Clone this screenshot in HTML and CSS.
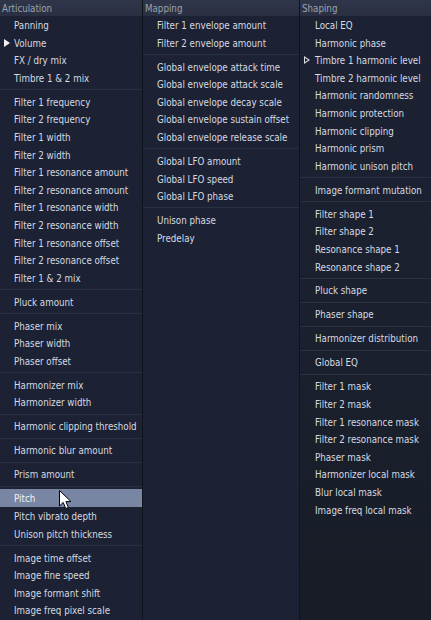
FILE: index.html
```html
<!DOCTYPE html>
<html>
<head>
<meta charset="utf-8">
<link rel="stylesheet" href="styles.css">
</head>
<body>
<div class="menu">
  <div class="col col-a">
    <div class="head">Articulation</div>
    <div class="item">Panning</div>
    <div class="item"><span class="mark filled"></span>Volume</div>
    <div class="item">FX / dry mix</div>
    <div class="item">Timbre 1 &amp; 2 mix</div>
    <div class="sep"></div>
    <div class="item">Filter 1 frequency</div>
    <div class="item">Filter 2 frequency</div>
    <div class="item">Filter 1 width</div>
    <div class="item">Filter 2 width</div>
    <div class="item">Filter 1 resonance amount</div>
    <div class="item">Filter 2 resonance amount</div>
    <div class="item">Filter 1 resonance width</div>
    <div class="item">Filter 2 resonance width</div>
    <div class="item">Filter 1 resonance offset</div>
    <div class="item">Filter 2 resonance offset</div>
    <div class="item">Filter 1 &amp; 2 mix</div>
    <div class="sep"></div>
    <div class="item">Pluck amount</div>
    <div class="sep"></div>
    <div class="item">Phaser mix</div>
    <div class="item">Phaser width</div>
    <div class="item">Phaser offset</div>
    <div class="sep"></div>
    <div class="item">Harmonizer mix</div>
    <div class="item">Harmonizer width</div>
    <div class="sep"></div>
    <div class="item">Harmonic clipping threshold</div>
    <div class="sep"></div>
    <div class="item">Harmonic blur amount</div>
    <div class="sep"></div>
    <div class="item">Prism amount</div>
    <div class="sep"></div>
    <div class="item active">Pitch
      <svg class="cursor" width="14" height="21" viewBox="0 0 14 21"><path d="M0.5 0.5 L0.5 16 L4.2 12.4 L6.8 18.6 L9.4 17.5 L6.9 11.6 L12 11.6 Z" fill="#fff" stroke="#000" stroke-width="1"/></svg>
    </div>
    <div class="item">Pitch vibrato depth</div>
    <div class="item">Unison pitch thickness</div>
    <div class="sep"></div>
    <div class="item">Image time offset</div>
    <div class="item">Image fine speed</div>
    <div class="item">Image formant shift</div>
    <div class="item">Image freq pixel scale</div>
  </div>
  <div class="col col-b">
    <div class="head">Mapping</div>
    <div class="item">Filter 1 envelope amount</div>
    <div class="item">Filter 2 envelope amount</div>
    <div class="sep"></div>
    <div class="item">Global envelope attack time</div>
    <div class="item">Global envelope attack scale</div>
    <div class="item">Global envelope decay scale</div>
    <div class="item">Global envelope sustain offset</div>
    <div class="item">Global envelope release scale</div>
    <div class="sep"></div>
    <div class="item">Global LFO amount</div>
    <div class="item">Global LFO speed</div>
    <div class="item">Global LFO phase</div>
    <div class="sep"></div>
    <div class="item">Unison phase</div>
    <div class="item">Predelay</div>
  </div>
  <div class="col col-c">
    <div class="head">Shaping</div>
    <div class="item">Local EQ</div>
    <div class="item">Harmonic phase</div>
    <div class="item"><span class="mark outline"></span>Timbre 1 harmonic level</div>
    <div class="item">Timbre 2 harmonic level</div>
    <div class="item">Harmonic randomness</div>
    <div class="item">Harmonic protection</div>
    <div class="item">Harmonic clipping</div>
    <div class="item">Harmonic prism</div>
    <div class="item">Harmonic unison pitch</div>
    <div class="sep"></div>
    <div class="item">Image formant mutation</div>
    <div class="sep"></div>
    <div class="item">Filter shape 1</div>
    <div class="item">Filter shape 2</div>
    <div class="item">Resonance shape 1</div>
    <div class="item">Resonance shape 2</div>
    <div class="sep"></div>
    <div class="item">Pluck shape</div>
    <div class="sep"></div>
    <div class="item">Phaser shape</div>
    <div class="sep"></div>
    <div class="item">Harmonizer distribution</div>
    <div class="sep"></div>
    <div class="item">Global EQ</div>
    <div class="sep"></div>
    <div class="item">Filter 1 mask</div>
    <div class="item">Filter 2 mask</div>
    <div class="item">Filter 1 resonance mask</div>
    <div class="item">Filter 2 resonance mask</div>
    <div class="item">Phaser mask</div>
    <div class="item">Harmonizer local mask</div>
    <div class="item">Blur local mask</div>
    <div class="item">Image freq local mask</div>
  </div>
</div>
</body>
</html>
```
FILE: styles.css
```css
html, body {
  margin: 0;
  padding: 0;
  height: 100%;
  background: #1b2130;
  overflow: hidden;
}
.menu {
  display: grid;
  grid-template-columns: 143px 157px 131px;
  height: 620px;
  font-family: "DejaVu Sans Condensed", "DejaVu Sans", "Liberation Sans", sans-serif;
  font-size: 9.7px;
  color: #d6dae2;
}
.col {
  display: flex;
  flex-direction: column;
  background: #1c2233;
  border-right: 1px solid #0f131b;
}
.col-c {
  border-right: none;
  background: linear-gradient(#1c2233, #1a202d 60%, #171c26);
}
.head {
  height: 16px;
  line-height: 17px;
  padding-left: 2px;
  background: linear-gradient(#30364a, #2a3042);
  color: #9ca2ad;
  flex: none;
}
.item {
  position: relative;
  height: 17.6px;
  line-height: 19.4px;
  padding-left: 14px;
  white-space: nowrap;
  flex: none;
}
.col-b .item { padding-left: 14px; }
.col-c .item { padding-left: 15px; }
.sep {
  height: 6.4px;
  flex: none;
  display: flex;
  align-items: center;
}
.sep::before {
  content: "";
  display: block;
  width: 100%;
  height: 1px;
  background: #2a3141;
}
.item.active {
  background: #7886a3;
  color: #f2f4f8;
}
.mark {
  position: absolute;
  top: 5px;
  width: 0;
  height: 0;
}
.mark.filled {
  left: 4px;
  border-left: 6px solid #f0f2f6;
  border-top: 4px solid transparent;
  border-bottom: 4px solid transparent;
}
.mark.outline {
  left: 4px;
  width: 6px;
  height: 8px;
}
.mark.outline::before {
  content: "";
  position: absolute;
  left: 0;
  top: 0;
  border-left: 6px solid #d6dae2;
  border-top: 4px solid transparent;
  border-bottom: 4px solid transparent;
}
.mark.outline::after {
  content: "";
  position: absolute;
  left: 1px;
  top: 2px;
  border-left: 3px solid #1c2233;
  border-top: 2px solid transparent;
  border-bottom: 2px solid transparent;
}
.cursor {
  position: absolute;
  left: 59px;
  top: 1px;
}
```
